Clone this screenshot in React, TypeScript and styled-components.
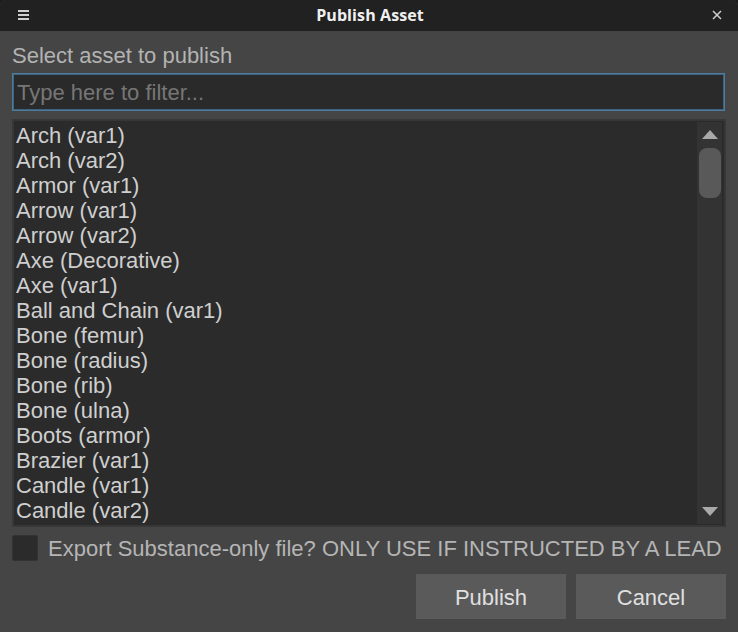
import React from "react";
import styled, { createGlobalStyle } from "styled-components";

const Global = createGlobalStyle`
  html, body {
    margin: 0;
    padding: 0;
    background: #1b1b1b;
  }
  * { box-sizing: border-box; }
`;

const Window = styled.div`
  width: 738px;
  height: 632px;
  display: flex;
  flex-direction: column;
  background: #454545;
  border-radius: 6px 6px 0 0;
  overflow: hidden;
  font-family: "Liberation Sans", Arial, sans-serif;
`;

const TitleBar = styled.div`
  height: 31px;
  flex: none;
  display: flex;
  align-items: center;
  justify-content: space-between;
  padding: 0 15px 2px 17px;
  background: #212121;
  color: #f0f0f0;
`;

const Title = styled.div`
  font-family: "Open Sans", "Noto Sans", sans-serif;
  font-weight: 700;
  font-size: 16px;
  letter-spacing: 0.1px;
`;

const IconBox = styled.div`
  width: 12px;
  height: 12px;
  display: flex;
  align-items: center;
  justify-content: center;
  color: #cfcfcf;
`;

const Content = styled.div`
  flex: 1;
  display: flex;
  flex-direction: column;
  padding: 10px 12px 13px 12px;
  min-height: 0;
`;

const Label = styled.div`
  font-size: 22px;
  line-height: 30px;
  color: #b3b3b3;
  margin-bottom: 2px;
`;

const Filter = styled.input`
  height: 38px;
  width: 713px;
  padding: 2px 5px 0 4px;
  background: #2a2a2a;
  border: 1px solid #4d7b9c;
  box-shadow: inset 0 0 0 1px #3d6482;
  color: #d0d0d0;
  font-family: "Liberation Sans", Arial, sans-serif;
  font-size: 22px;
  outline: none;
  caret-color: #e0e0e0;
  &::placeholder {
    color: #767676;
  }
`;

const ListFrame = styled.div`
  margin-top: 8px;
  width: 714px;
  height: 408px;
  flex: none;
  display: flex;
  background: #2b2b2b;
  border: 1px solid #383838;
  box-shadow: inset 0 0 0 1px #363636;
  padding: 2px 3px 2px 2px;
`;

const Items = styled.div`
  flex: 1;
  overflow: hidden;
  padding: 1px 0 0 1px;
`;

const Item = styled.div`
  height: 25px;
  line-height: 25px;
  font-size: 22px;
  color: #cfcfcf;
  white-space: nowrap;
`;

const ScrollBar = styled.div`
  width: 25px;
  flex: none;
  display: flex;
  flex-direction: column;
  align-items: center;
  background: #333333;
  padding: 8px 0 8px 0;
`;

const Arrow = styled.div<{ $down?: boolean }>`
  width: 0;
  height: 0;
  border-left: 8.5px solid transparent;
  border-right: 8.5px solid transparent;
  ${(p) =>
    p.$down
      ? "border-top: 9px solid #a9a9a9;"
      : "border-bottom: 9px solid #a9a9a9;"}
`;

const Track = styled.div`
  flex: 1;
  width: 100%;
  padding: 9px 1px 0 2px;
`;

const Thumb = styled.div`
  height: 50px;
  border-radius: 8px;
  background: #595959;
`;

const CheckRow = styled.label`
  margin-top: 8px;
  display: flex;
  align-items: center;
  gap: 10px;
  height: 26px;
`;

const CheckBox = styled.span`
  width: 26px;
  height: 26px;
  flex: none;
  border-radius: 2px;
  background: #2b2b2b;
  border: 1px solid #333333;
`;

const CheckText = styled.span`
  font-size: 22px;
  line-height: 26px;
  padding-top: 2px;
  color: #b5b5b5;
  white-space: nowrap;
`;

const Buttons = styled.div`
  margin-top: auto;
  display: flex;
  justify-content: flex-end;
  gap: 10px;
  width: 714px;
`;

const Button = styled.button`
  width: 150px;
  height: 45px;
  border: none;
  background: #5a5a5a;
  color: #e0e0e0;
  font-family: "Liberation Sans", Arial, sans-serif;
  font-size: 22px;
  padding: 2px 0 0 0;
`;

const assets = [
  "Arch (var1)",
  "Arch (var2)",
  "Armor (var1)",
  "Arrow (var1)",
  "Arrow (var2)",
  "Axe (Decorative)",
  "Axe (var1)",
  "Ball and Chain (var1)",
  "Bone (femur)",
  "Bone (radius)",
  "Bone (rib)",
  "Bone (ulna)",
  "Boots (armor)",
  "Brazier (var1)",
  "Candle (var1)",
  "Candle (var2)",
];

export default function App(): JSX.Element {
  return (
    <Window>
      <Global />
      <TitleBar>
        <IconBox>
          <svg width="11" height="10" viewBox="0 0 11 10">
            <rect x="0" y="0" width="11" height="2" fill="currentColor" />
            <rect x="0" y="4" width="11" height="2" fill="currentColor" />
            <rect x="0" y="8" width="11" height="2" fill="currentColor" />
          </svg>
        </IconBox>
        <Title>Publish Asset</Title>
        <IconBox>
          <svg width="10" height="10" viewBox="0 0 10 10">
            <path d="M1 1 L9 9 M9 1 L1 9" stroke="currentColor" strokeWidth="1.5" />
          </svg>
        </IconBox>
      </TitleBar>
      <Content>
        <Label>Select asset to publish</Label>
        <Filter placeholder="Type here to filter..." autoFocus />
        <ListFrame>
          <Items>
            {assets.map((a) => (
              <Item key={a}>{a}</Item>
            ))}
          </Items>
          <ScrollBar>
            <Arrow />
            <Track>
              <Thumb />
            </Track>
            <Arrow $down />
          </ScrollBar>
        </ListFrame>
        <CheckRow>
          <CheckBox />
          <CheckText>Export Substance-only file? ONLY USE IF INSTRUCTED BY A LEAD</CheckText>
        </CheckRow>
        <Buttons>
          <Button>Publish</Button>
          <Button>Cancel</Button>
        </Buttons>
      </Content>
    </Window>
  );
}
